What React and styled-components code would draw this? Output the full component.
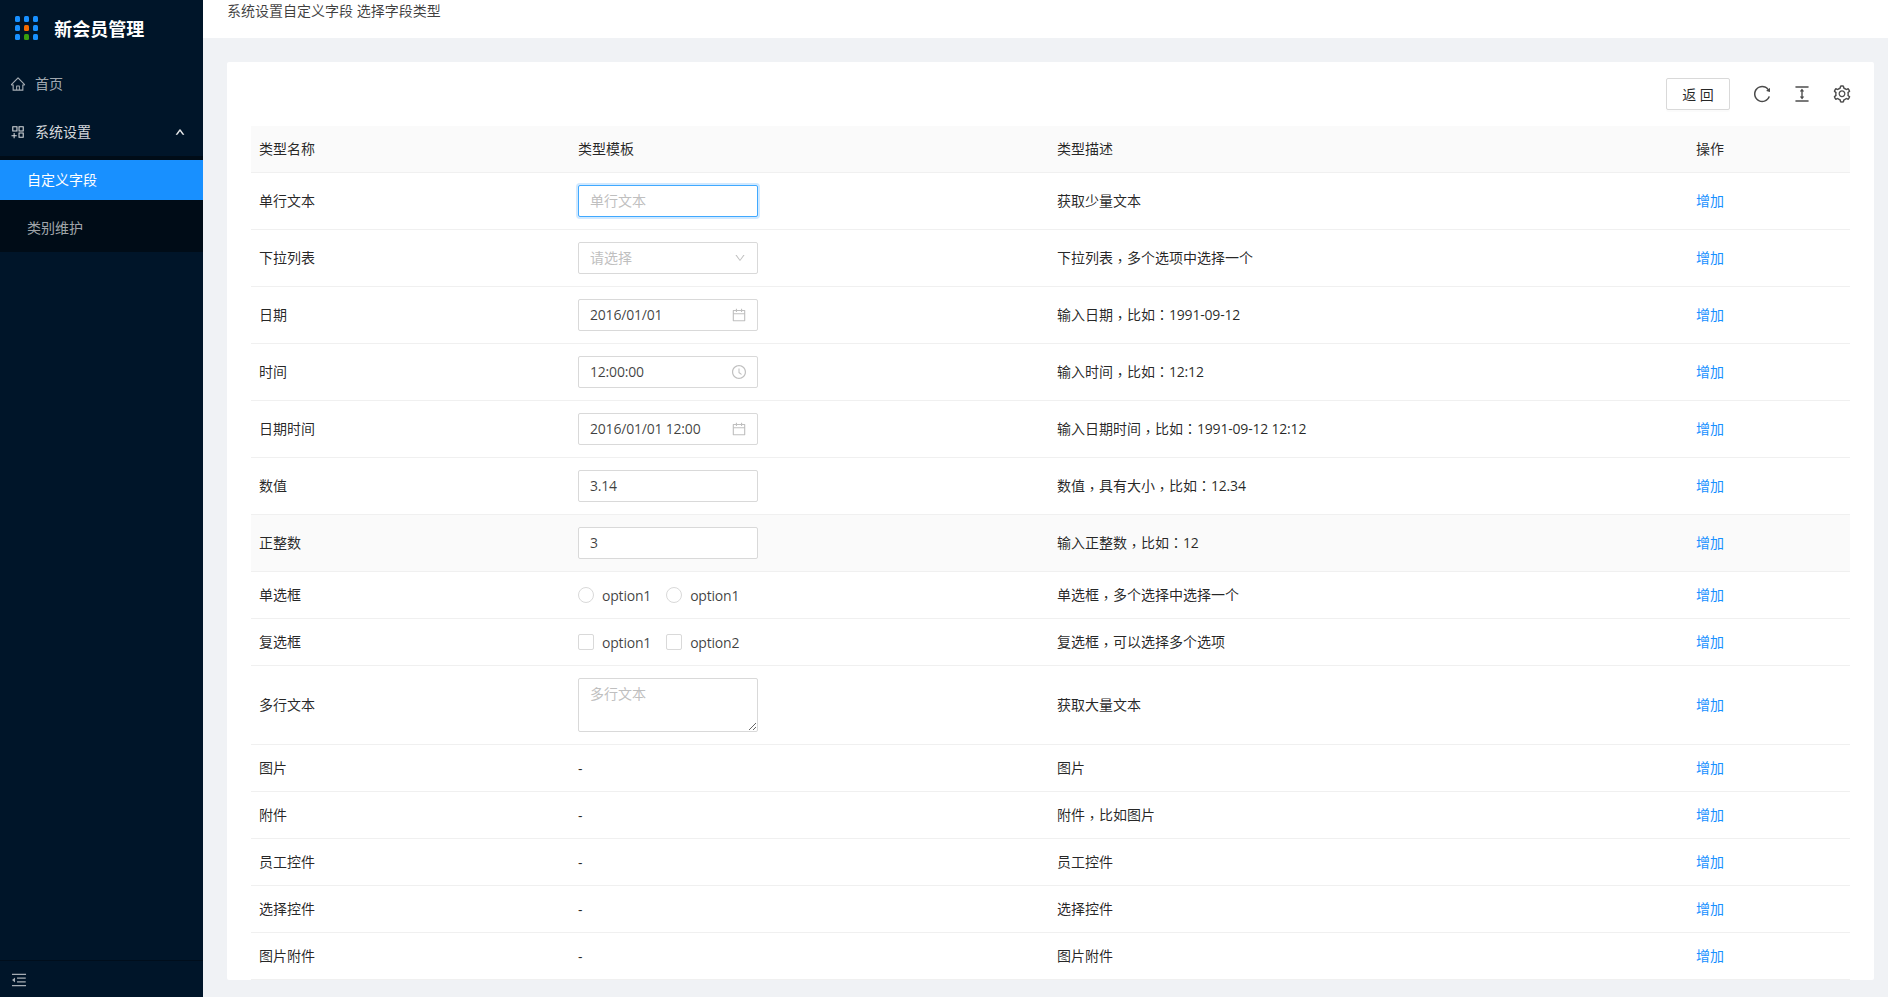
import React from 'react';
import styled, { createGlobalStyle } from 'styled-components';
import {
  AiOutlineHome,
  AiOutlineAppstoreAdd,
  AiOutlineCalendar,
  AiOutlineClockCircle,
  AiOutlineDown,
  AiOutlineUp,
  AiOutlineReload,
  AiOutlineColumnHeight,
  AiOutlineSetting,
  AiOutlineMenuFold,
} from 'react-icons/ai';

const GlobalStyle = createGlobalStyle`
  html, body {
    margin: 0;
    padding: 0;
    background: #f0f2f5;
  }
  body {
    font-family: "Open Sans", "Noto Sans CJK SC", sans-serif;
    font-size: 14px;
    color: rgba(0, 0, 0, 0.85);
  }
  * {
    box-sizing: border-box;
  }
`;

const Layout = styled.div`
  display: flex;
  height: 997px;
  overflow: hidden;
`;

const Sidebar = styled.aside`
  width: 203px;
  flex: none;
  display: flex;
  flex-direction: column;
  background: #001529;
  color: rgba(255, 255, 255, 0.65);
`;

const Brand = styled.div`
  display: flex;
  align-items: center;
  height: 56px;
  padding-left: 15px;
  gap: 16px;
`;

const LogoGrid = styled.div`
  display: grid;
  grid-template-columns: repeat(3, 5.4px);
  grid-auto-rows: 5.4px;
  gap: 3.6px;
`;

const LogoDot = styled.span`
  border-radius: 1.5px;
  background: ${(p) => p.$color};
`;

const BrandName = styled.div`
  font-size: 18px;
  font-weight: 700;
  color: #fff;
`;

const Menu = styled.nav`
  flex: 1;
  display: flex;
  flex-direction: column;
  padding-top: 4px;
`;

const MenuItem = styled.div`
  display: flex;
  align-items: center;
  height: 48px;
  padding: 0 18px 0 10px;
  gap: 9px;
  color: ${(p) => (p.$open ? 'rgba(255, 255, 255, 0.85)' : 'rgba(255, 255, 255, 0.65)')};
  svg {
    flex: none;
    font-size: 16px;
  }
`;

const MenuLabel = styled.span`
  flex: 1;
  padding-bottom: 2px;
`;

const MenuCaret = styled(AiOutlineUp)`
  && {
    font-size: 10px;
    color: #fff;
    stroke: currentColor;
    stroke-width: 70;
  }
`;

const SubMenu = styled.div`
  display: flex;
  flex-direction: column;
  gap: 8px;
  padding: 4px 0;
  background: #000c17;
`;

const SubItem = styled.div`
  display: flex;
  align-items: center;
  height: 40px;
  padding: 0 0 2px 27px;
  background: ${(p) => (p.$active ? '#1890ff' : 'transparent')};
  color: ${(p) => (p.$active ? '#fff' : 'rgba(255, 255, 255, 0.65)')};
`;

const Collapse = styled.div`
  height: 37px;
  display: flex;
  align-items: center;
  padding: 1px 0 0 10px;
  border-top: 1px solid #000e1c;
  color: rgba(255, 255, 255, 0.65);
  font-size: 18px;
`;

const Main = styled.main`
  flex: 1;
  min-width: 0;
  display: flex;
  flex-direction: column;
`;

const Header = styled.header`
  height: 38px;
  flex: none;
  padding-left: 24px;
  background: #fff;
  line-height: 22px;
  color: rgba(0, 0, 0, 0.75);
`;

const Content = styled.div`
  flex: 1;
  min-height: 0;
  padding: 24px 14px 17px 24px;
`;

const Card = styled.section`
  height: 100%;
  overflow: hidden;
  padding: 16px 24px 0;
  background: #fff;
  border-radius: 2px;
`;

const Toolbar = styled.div`
  display: flex;
  align-items: center;
  justify-content: flex-end;
  height: 32px;
  margin-bottom: 16px;
`;

const BackButton = styled.button`
  width: 64px;
  height: 32px;
  margin-right: 12px;
  padding: 0 0 1px;
  border: 1px solid #d9d9d9;
  border-radius: 2px;
  background: #fff;
  font: inherit;
  color: rgba(0, 0, 0, 0.85);
  box-shadow: 0 2px 0 rgba(0, 0, 0, 0.015);
`;

const ToolIcon = styled.span`
  width: 40px;
  display: flex;
  justify-content: center;
  font-size: 20px;
  color: rgba(0, 0, 0, 0.7);
  &:last-child {
    margin-right: -12px;
  }
`;

const Row = styled.div`
  display: grid;
  grid-template-columns: 319px 479px 639px 1fr;
  align-items: center;
  height: ${(p) => p.$height}px;
  border-bottom: 1px solid #f0f0f0;
  background: ${(p) => (p.$shaded ? '#fafafa' : 'transparent')};
`;

const Cell = styled.div`
  padding: 0 8px;
`;

const TextCell = styled(Cell)`
  padding-bottom: 2px;
`;

const Punct = styled.span`
  font-family: "Noto Sans CJK TC", sans-serif;
  line-height: 0;
  vertical-align: ${(p) => (p.$low ? '-3px' : 'baseline')};
`;

const Latin = styled.span`
  letter-spacing: -0.2px;
`;

const AddLink = styled.a`
  color: #1890ff;
  cursor: pointer;
`;

const Field = styled.div`
  display: flex;
  align-items: center;
  width: 180px;
  height: 32px;
  padding: 0 11px;
  border: 1px solid ${(p) => (p.$focused ? '#40a9ff' : '#d9d9d9')};
  border-radius: 2px;
  background: #fff;
  box-shadow: ${(p) => (p.$focused ? '0 0 0 2px rgba(24, 144, 255, 0.2)' : 'none')};
  svg {
    flex: none;
    margin-right: -1px;
    font-size: 16px;
    color: rgba(0, 0, 0, 0.25);
  }
`;

const SelectArrow = styled(AiOutlineDown)`
  && {
    margin-right: 0;
    font-size: 12px;
  }
`;

const FieldInput = styled.input`
  flex: 1;
  min-width: 0;
  padding: 0 0 2px;
  border: 0;
  outline: 0;
  background: transparent;
  font: inherit;
  letter-spacing: -0.2px;
  color: rgba(0, 0, 0, 0.75);
  &::placeholder {
    color: #bfbfbf;
    letter-spacing: 0;
  }
`;

const TextArea = styled.textarea`
  display: block;
  width: 180px;
  height: 54px;
  padding: 4px 11px;
  border: 1px solid #d9d9d9;
  border-radius: 2px;
  outline: 0;
  font: inherit;
  line-height: 22px;
  resize: vertical;
  &::placeholder {
    color: #bfbfbf;
  }
`;

const Choices = styled.div`
  display: flex;
  gap: 15px;
`;

const Choice = styled.label`
  display: flex;
  align-items: center;
  gap: 8px;
  letter-spacing: -0.2px;
  color: rgba(0, 0, 0, 0.75);
`;

const ChoiceMark = styled.span`
  width: 16px;
  height: 16px;
  border: 1px solid #d9d9d9;
  border-radius: ${(p) => (p.$round ? '50%' : '2px')};
  background: #fff;
`;

const logoColors = [
  '#1890ff', '#1890ff', '#1890ff',
  '#1890ff', '#f56a00', '#1890ff',
  '#1890ff', '#389e0d', '#1890ff',
];

const Input = ({ value, placeholder, focused, icon }) => (
  <Field $focused={focused}>
    <FieldInput readOnly value={value || ''} placeholder={placeholder} />
    {icon}
  </Field>
);

const Options = ({ round, labels }) => (
  <Choices>
    {labels.map((label, i) => (
      <Choice key={i}>
        <ChoiceMark $round={round} />
        {label}
      </Choice>
    ))}
  </Choices>
);

// the punctuation and digits in the descriptions are set apart from the CJK text
const Description = ({ text }) =>
  text.match(/[，：]|[\x20-\x7e]+|[^，：\x20-\x7e]+/g).map((part, i) => {
    if (part === '，' || part === '：') return <Punct key={i} $low={part === '，'}>{part}</Punct>;
    if (/^[\x20-\x7e]+$/.test(part)) return <Latin key={i}>{part}</Latin>;
    return part;
  });

const rows = [
  { name: '单行文本', desc: '获取少量文本', height: 57, control: <Input placeholder="单行文本" focused /> },
  { name: '下拉列表', desc: '下拉列表，多个选项中选择一个', height: 57, control: <Input placeholder="请选择" icon={<SelectArrow />} /> },
  { name: '日期', desc: '输入日期，比如：1991-09-12', height: 57, control: <Input value="2016/01/01" icon={<AiOutlineCalendar />} /> },
  { name: '时间', desc: '输入时间，比如：12:12', height: 57, control: <Input value="12:00:00" icon={<AiOutlineClockCircle />} /> },
  { name: '日期时间', desc: '输入日期时间，比如：1991-09-12 12:12', height: 57, control: <Input value="2016/01/01 12:00" icon={<AiOutlineCalendar />} /> },
  { name: '数值', desc: '数值，具有大小，比如：12.34', height: 57, control: <Input value="3.14" /> },
  { name: '正整数', desc: '输入正整数，比如：12', height: 57, shaded: true, control: <Input value="3" /> },
  { name: '单选框', desc: '单选框，多个选择中选择一个', height: 47, control: <Options round labels={['option1', 'option1']} /> },
  { name: '复选框', desc: '复选框，可以选择多个选项', height: 47, control: <Options labels={['option1', 'option2']} /> },
  { name: '多行文本', desc: '获取大量文本', height: 79, control: <TextArea readOnly placeholder="多行文本" /> },
  { name: '图片', desc: '图片', height: 47, control: '-' },
  { name: '附件', desc: '附件，比如图片', height: 47, control: '-' },
  { name: '员工控件', desc: '员工控件', height: 47, control: '-' },
  { name: '选择控件', desc: '选择控件', height: 47, control: '-' },
  { name: '图片附件', desc: '图片附件', height: 47, control: '-' },
];

const App = () => (
  <>
    <GlobalStyle />
    <Layout>
      <Sidebar>
        <Brand>
          <LogoGrid>
            {logoColors.map((color, i) => (
              <LogoDot key={i} $color={color} />
            ))}
          </LogoGrid>
          <BrandName>新会员管理</BrandName>
        </Brand>
        <Menu>
          <MenuItem>
            <AiOutlineHome />
            <MenuLabel>首页</MenuLabel>
          </MenuItem>
          <MenuItem $open>
            <AiOutlineAppstoreAdd />
            <MenuLabel>系统设置</MenuLabel>
            <MenuCaret />
          </MenuItem>
          <SubMenu>
            <SubItem $active>自定义字段</SubItem>
            <SubItem>类别维护</SubItem>
          </SubMenu>
        </Menu>
        <Collapse>
          <AiOutlineMenuFold />
        </Collapse>
      </Sidebar>
      <Main>
        <Header>系统设置自定义字段 选择字段类型</Header>
        <Content>
          <Card>
            <Toolbar>
              <BackButton>返 回</BackButton>
              <ToolIcon><AiOutlineReload /></ToolIcon>
              <ToolIcon><AiOutlineColumnHeight /></ToolIcon>
              <ToolIcon><AiOutlineSetting /></ToolIcon>
            </Toolbar>
            <Row $height={47} $shaded>
              <TextCell>类型名称</TextCell>
              <TextCell>类型模板</TextCell>
              <TextCell>类型描述</TextCell>
              <TextCell>操作</TextCell>
            </Row>
            {rows.map((row) => (
              <Row key={row.name} $height={row.height} $shaded={row.shaded}>
                <TextCell>{row.name}</TextCell>
                <Cell>{row.control}</Cell>
                <TextCell><Description text={row.desc} /></TextCell>
                <TextCell><AddLink>增加</AddLink></TextCell>
              </Row>
            ))}
          </Card>
        </Content>
      </Main>
    </Layout>
  </>
);

export default App;
